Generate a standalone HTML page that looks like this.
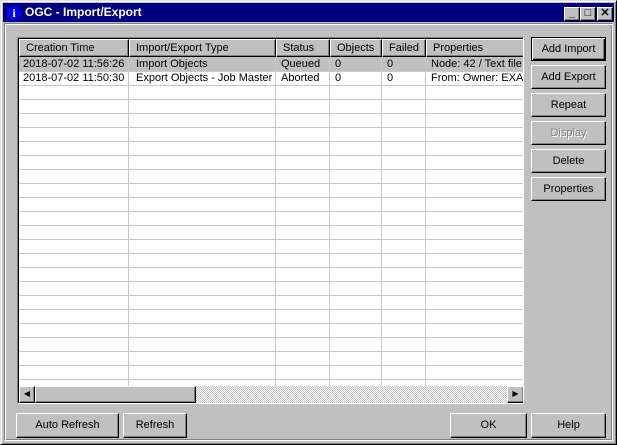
<!DOCTYPE html><html><head><style>
*{margin:0;padding:0;box-sizing:border-box}
body{width:617px;height:445px;background:#c0c0c0;font-family:"Liberation Sans",sans-serif;font-size:11px;position:relative;overflow:hidden}
.win{position:absolute;left:0;top:0;width:617px;height:445px;border:1px solid;border-color:#dfdfdf #000 #000 #dfdfdf;box-shadow:inset 1px 1px #fff,inset -1px -1px #808080}
.title{position:absolute;left:3px;top:3px;width:611px;height:19px;background:#000080;color:#fff;font-weight:bold;font-size:12px;line-height:19px;padding-left:22px}
.ico{position:absolute;left:4px;top:3px;width:14px;height:14px;border-radius:50%;background:#0000ff;color:#fff;font-size:12px;text-align:center;line-height:14px;font-family:"Liberation Serif",serif}
.tb{position:absolute;top:4px;width:16px;height:14px;background:#c0c0c0;border:1px solid;border-color:#fff #000 #000 #fff;box-shadow:inset -1px -1px #808080;color:#000;font-size:11px;line-height:11px;text-align:center}
.frame{position:absolute;left:4px;top:23px;width:609px;height:418px;border:1px solid;border-color:#808080 #fff #fff #808080;box-shadow:inset 1px 1px #fff,inset -1px -1px #808080}
.lv{position:absolute;left:17px;top:37px;width:507px;height:367px;border:1px solid;border-color:#808080 #fff #fff #808080;box-shadow:inset 1px 1px #000;background:#fff;overflow:hidden}
.hd{position:absolute;top:1px;height:18px;background:#c0c0c0;border:1px solid;border-color:#fff #000 #000 #fff;box-shadow:inset -1px -1px #808080;padding-left:6px;line-height:16px;white-space:nowrap;overflow:hidden}
.vl{position:absolute;top:19px;width:1px;height:330px;background:#c8c8c8}
.hl{position:absolute;left:1px;width:505px;height:1px;background:#c8c8c8}
.c{position:absolute;white-space:nowrap;overflow:hidden;line-height:13px}
.btn{position:absolute;background:#c0c0c0;border:1px solid;border-color:#fff #000 #000 #fff;box-shadow:inset -1px -1px #808080;text-align:center;font-size:11px}
.sb{position:absolute;left:1px;top:348px;width:505px;height:17px;background-color:#e0e0e0;background-image:repeating-conic-gradient(#c0c0c0 0 25%,#fff 0 50%);background-size:2px 2px}
</style></head><body>
<div class="win"></div>
<div class="frame"></div>
<div class="title"><div class="ico">i</div>OGC - Import/Export
<div class="tb" style="left:561px">_</div><div class="tb" style="left:577px">□</div><div class="tb" style="left:594px;font-weight:bold">✕</div></div>
<div class="lv">
<div class="hd" style="left:1px;width:110px">Creation Time</div>
<div class="hd" style="left:111px;width:147px">Import/Export Type</div>
<div class="hd" style="left:258px;width:54px">Status</div>
<div class="hd" style="left:312px;width:52px">Objects</div>
<div class="hd" style="left:364px;width:44px">Failed</div>
<div class="hd" style="left:408px;width:110px">Properties</div>
<div style="position:absolute;left:1px;top:19px;width:505px;height:14px;background:#c0c0c0"></div>
<div class="vl" style="left:110px"></div><div class="vl" style="left:257px"></div><div class="vl" style="left:311px"></div><div class="vl" style="left:363px"></div><div class="vl" style="left:407px"></div>
<div id="hls"></div>
<div class="c" style="left:5px;top:20px">2018-07-02 11:56:26</div><div class="c" style="left:118px;top:20px">Import Objects</div><div class="c" style="left:263px;top:20px">Queued</div><div class="c" style="left:317px;top:20px">0</div><div class="c" style="left:369px;top:20px">0</div><div class="c" style="left:413px;top:20px;width:93px">Node: 42 / Text file</div>
<div class="c" style="left:5px;top:34px">2018-07-02 11:50:30</div><div class="c" style="left:118px;top:34px">Export Objects - Job Master</div><div class="c" style="left:263px;top:34px">Aborted</div><div class="c" style="left:317px;top:34px">0</div><div class="c" style="left:369px;top:34px">0</div><div class="c" style="left:413px;top:34px;width:93px">From: Owner: EXAMPLE</div>
<div class="sb"></div>
<div class="btn" style="left:1px;top:348px;width:16px;height:17px;font-size:8px;line-height:14px">◀</div>
<div class="btn" style="left:17px;top:348px;width:161px;height:17px"></div>
<div class="btn" style="left:489px;top:348px;width:17px;height:17px;font-size:8px;line-height:14px">▶</div>
</div>
<div class="btn" style="left:531px;top:37px;width:75px;height:24px;line-height:22px;border-color:#000;box-shadow:inset 1px 1px #fff,inset -1px -1px #000,inset -2px -2px #808080">Add Import</div>
<div class="btn" style="left:531px;top:65px;width:75px;height:24px;line-height:22px">Add Export</div>
<div class="btn" style="left:531px;top:93px;width:75px;height:24px;line-height:22px">Repeat</div>
<div class="btn" style="left:531px;top:121px;width:75px;height:24px;line-height:22px;color:#808080;text-shadow:1px 1px #fff">Display</div>
<div class="btn" style="left:531px;top:149px;width:75px;height:24px;line-height:22px">Delete</div>
<div class="btn" style="left:531px;top:177px;width:75px;height:24px;line-height:22px">Properties</div>
<div class="btn" style="left:16px;top:413px;width:103px;height:25px;line-height:23px">Auto Refresh</div>
<div class="btn" style="left:123px;top:413px;width:64px;height:25px;line-height:23px">Refresh</div>
<div class="btn" style="left:450px;top:413px;width:77px;height:25px;line-height:23px">OK</div>
<div class="btn" style="left:531px;top:413px;width:75px;height:25px;line-height:23px">Help</div>
<script>
var h='';for(var y=33;y<348;y+=14)h+='<div class="hl" style="top:'+y+'px"></div>';document.getElementById('hls').innerHTML=h;
</script>
</body></html>
